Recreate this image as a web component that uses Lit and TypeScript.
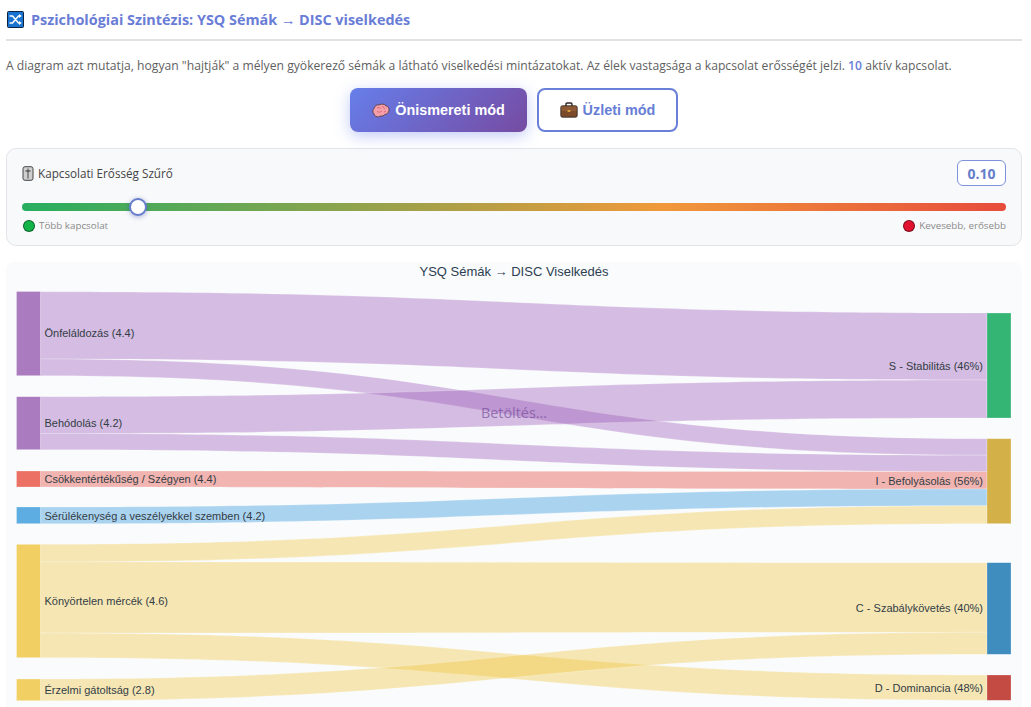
import { LitElement, html, css, svg } from "lit";
import { customElement } from "lit/decorators.js";

type Node = { label: string; y0: number; y1: number; color: string; side: "l" | "r"; ly: number };
type Link = { a0: number; a1: number; b0: number; b1: number; color: string };

const PURPLE = "rgba(155,89,182,0.39)";
const RED = "rgba(231,76,60,0.4)";
const BLUE = "rgba(52,152,219,0.4)";
const YELLOW = "rgba(240,196,60,0.38)";

const NODES: Node[] = [
  { label: "Önfeláldozás (4.4)", y0: 291.5, y1: 375.7, color: "#ab7bc0", side: "l", ly: 333 },
  { label: "Behódolás (4.2)", y0: 396.7, y1: 449.7, color: "#ab7bc0", side: "l", ly: 423 },
  { label: "Csökkentértékűség / Szégyen (4.4)", y0: 471, y1: 487, color: "#ec7063", side: "l", ly: 479 },
  { label: "Sérülékenység a veszélyekkel szemben (4.2)", y0: 507, y1: 523.7, color: "#5dade2", side: "l", ly: 516 },
  { label: "Könyörtelen mércék (4.6)", y0: 544.3, y1: 657.7, color: "#f1cf63", side: "l", ly: 601 },
  { label: "Érzelmi gátoltság (2.8)", y0: 679, y1: 700.7, color: "#f1cf63", side: "l", ly: 690 },
  { label: "S - Stabilitás (46%)", y0: 313, y1: 418, color: "#34b574", side: "r", ly: 365.5 },
  { label: "I - Befolyásolás (56%)", y0: 438.7, y1: 523.7, color: "#d4b048", side: "r", ly: 481 },
  { label: "C - Szabálykövetés (40%)", y0: 562.7, y1: 654.3, color: "#3f8cbf", side: "r", ly: 608 },
  { label: "D - Dominancia (48%)", y0: 675, y1: 700.3, color: "#c44a44", side: "r", ly: 688 },
];

const LINKS: Link[] = [
  { a0: 291.7, a1: 359, b0: 313, b1: 380, color: PURPLE },
  { a0: 359, a1: 375.7, b0: 438.7, b1: 455.2, color: PURPLE },
  { a0: 396.7, a1: 433.5, b0: 380, b1: 418, color: PURPLE },
  { a0: 433.5, a1: 449.7, b0: 455.2, b1: 471.5, color: PURPLE },
  { a0: 471, a1: 487, b0: 471.5, b1: 489, color: RED },
  { a0: 507, a1: 523.7, b0: 489, b1: 505.7, color: BLUE },
  { a0: 544.3, a1: 562, b0: 505.7, b1: 523.7, color: YELLOW },
  { a0: 562, a1: 633, b0: 562.7, b1: 632.3, color: YELLOW },
  { a0: 633, a1: 657.7, b0: 675, b1: 700.3, color: YELLOW },
  { a0: 679, a1: 700.7, b0: 632.3, b1: 654.3, color: YELLOW },
];

const X0 = 10.5, X1 = 34.5, X2 = 981; // chart-local x
const TOP = 262;
const xm = (X1 + X2) / 2;

function linkPath(l: Link): string {
  const t = (v: number) => v - TOP;
  return `M${X1} ${t(l.a0)}C${xm} ${t(l.a0)} ${xm} ${t(l.b0)} ${X2} ${t(l.b0)}L${X2} ${t(l.b1)}C${xm} ${t(l.b1)} ${xm} ${t(l.a1)} ${X1} ${t(l.a1)}Z`;
}

@customElement("app-root")
export class AppRoot extends LitElement {
  static styles = css`
    :host {
      display: block;
      height: 707px;
      overflow: hidden;
      box-sizing: border-box;
      padding: 0 9px 0 6px;
      background: #fff;
      font-family: "Open Sans", "Noto Sans", sans-serif;
      color: #555;
    }
    .head {
      display: flex;
      align-items: center;
      gap: 7px;
      height: 41px;
      padding-left: 1px;
      padding-bottom: 1px;
      box-sizing: border-box;
      border-bottom: 2px solid #e2e2e2;
      font-size: 14.4px;
      font-weight: 700;
      color: #6a7dd6;
    }
    .desc {
      margin: 0;
      padding-top: 16px;
      line-height: 18px;
      font-size: 12.16px;
      color: #5f5f5f;
      white-space: nowrap;
    }
    .desc b { color: #667ed6; font-weight: 600; }
    .modes {
      display: flex;
      justify-content: center;
      gap: 10px;
      margin-top: 13px;
    }
    .btn {
      display: flex;
      align-items: center;
      justify-content: center;
      gap: 5px;
      box-sizing: border-box;
      height: 44px;
      border-radius: 8px;
      font-family: "Liberation Sans", Arial, sans-serif;
      font-size: 14.4px;
      font-weight: 700;
    }
    .btn.on {
      width: 177px;
      color: #fff;
      background: linear-gradient(135deg, #667eea, #764ba2);
      box-shadow: 0 4px 15px rgba(102, 126, 234, 0.4);
    }
    .btn.off {
      width: 141px;
      color: #667ed6;
      background: #fff;
      border: 2px solid #6a7fd8;
    }
    .panel {
      box-sizing: border-box;
      height: 98px;
      margin-top: 16px;
      padding: 11px 15px 0;
      background: #f8f9fb;
      border: 1px solid #e2e4e8;
      border-radius: 10px;
    }
    .row {
      display: flex;
      justify-content: space-between;
      align-items: center;
    }
    .ftitle {
      display: flex;
      align-items: center;
      gap: 4px;
      font-size: 11.7px;
      font-weight: 500;
      color: #444;
    }
    .val {
      box-sizing: border-box;
      width: 49px;
      height: 26px;
      display: flex;
      align-items: center;
      justify-content: center;
      font-size: 14px;
      font-weight: 700;
      color: #667ecb;
      background: #fff;
      border: 1px solid #7f93dc;
      border-radius: 6px;
    }
    .track {
      position: relative;
      height: 8px;
      margin-top: 17px;
      border-radius: 4px;
      background: linear-gradient(90deg, #27ae60 0%, #f0993a 65%, #e74c3c 100%);
    }
    .thumb {
      position: absolute;
      left: 107px;
      top: -5px;
      width: 18px;
      height: 18px;
      box-sizing: border-box;
      border-radius: 50%;
      background: #fff;
      border: 2px solid #667ecb;
      box-shadow: 0 1px 5px rgba(60, 80, 170, 0.45);
    }
    .ends {
      display: flex;
      justify-content: space-between;
      margin-top: 8px;
      font-size: 9.8px;
      line-height: 13px;
      color: #8a8a8a;
    }
    .end { display: flex; align-items: center; gap: 4px; }
    .dot {
      width: 12px;
      height: 12px;
      margin-left: 1px;
      border-radius: 50%;
      border: 1px solid rgba(0, 0, 0, 0.45);
      box-sizing: border-box;
    }
    .dot.g { background: #12b347; }
    .dot.r { background: #e0122f; }
    .chart {
      position: relative;
      height: 460px;
      margin-top: 16px;
      background: #f9fbfd;
      border-radius: 8px 8px 0 0;
    }
    .chart svg { display: block; }
    .ctitle {
      font-family: "Liberation Sans", Arial, sans-serif;
      font-size: 13px;
      fill: #2c3e50;
    }
    .lbl {
      font-family: "Liberation Sans", Arial, sans-serif;
      font-size: 11px;
      fill: #333d45;
    }
    .loading {
      position: absolute;
      left: 0;
      right: 0;
      top: 141px;
      text-align: center;
      font-size: 14.4px;
      color: rgba(110, 70, 150, 0.65);
    }
  `;

  private shuffle() {
    return html`<svg width="17" height="17" viewBox="0 0 17 17">
      <rect x=".5" y=".5" width="16" height="16" rx="1" fill="#1a73d0" stroke="#0e2340"/>
      <path d="M2.500 5h3l6 7H13M2.500 12h3l6-7H13" fill="none" stroke="#fff" stroke-width="1.500"/>
      <path d="M12 3l2.800 2L12 7zM12 10l2.800 2-2.800 2z" fill="#fff"/>
    </svg>`;
  }

  private brain() {
    return html`<svg width="18" height="15" viewBox="0 0 18 15">
      <path d="M2 11C.4 9.500.5 6.600 2 5.400 2.600 2.800 5 1.400 7.400 1.800 9.400.6 12.600 1 14 2.800c2.200.6 3.400 2.600 3 4.600-.2 2.400-2 4-4.200 4-1 1.400-2.800 2-4.600 1.600-.8.8-2.200 1.200-3.200.6-1-.2-2.600-.6-3-2.600z" fill="#f4a0ab" stroke="#5a3a44" stroke-width=".9"/>
      <path d="M5 5c1.500-1 3-.5 3.500.8M10 3.600c1.400.2 2.500 1.200 2.600 2.500M5 8.600c1.500.8 3.500.6 4.800-.4M12 9c.8-.1 1.500-.5 2-1.200" fill="none" stroke="#d9606f" stroke-width=".9"/>
    </svg>`;
  }

  private case() {
    return html`<svg width="18" height="16" viewBox="0 0 18 16">
      <path d="M6 4V2.200C6 1.500 6.500 1 7.200 1h3.600c.7 0 1.200.5 1.200 1.200V4" fill="none" stroke="#2c2320" stroke-width="1.400"/>
      <rect x=".8" y="3.800" width="16.400" height="11.400" rx="1.600" fill="#7a4a2a" stroke="#2c2320" stroke-width=".8"/>
      <rect x="1.500" y="4.500" width="15" height="4.600" rx="1" fill="#8d5a35"/>
      <rect x="7.600" y="8.200" width="2.800" height="1.600" fill="#f0b040"/>
    </svg>`;
  }

  private slider() {
    return html`<svg width="12" height="15" viewBox="0 0 12 15">
      <rect x="1" y=".7" width="10" height="13.600" rx="2" fill="#cfcfcf" stroke="#444" stroke-width="1"/>
      <path d="M6 2.500v10" stroke="#444" stroke-width="1"/>
      <path d="M3.500 5h5" stroke="#444" stroke-width="1.200"/>
    </svg>`;
  }

  render() {
    return html`
      <div class="head">${this.shuffle()}<span>Pszichológiai Szintézis: YSQ Sémák → DISC viselkedés</span></div>
      <p class="desc">A diagram azt mutatja, hogyan "hajtják" a mélyen gyökerező sémák a látható viselkedési mintázatokat. Az élek vastagsága a kapcsolat erősségét jelzi. <b>10</b> aktív kapcsolat.</p>
      <div class="modes">
        <div class="btn on">${this.brain()}<span>Önismereti mód</span></div>
        <div class="btn off">${this.case()}<span>Üzleti mód</span></div>
      </div>
      <div class="panel">
        <div class="row">
          <div class="ftitle">${this.slider()}<span>Kapcsolati Erősség Szűrő</span></div>
          <div class="val">0.10</div>
        </div>
        <div class="track"><div class="thumb"></div></div>
        <div class="ends">
          <div class="end"><span class="dot g"></span><span>Több kapcsolat</span></div>
          <div class="end"><span class="dot r"></span><span>Kevesebb, erősebb</span></div>
        </div>
      </div>
      <div class="chart">
        <svg width="1016" height="460" viewBox="0 0 1016 460">
          <text class="ctitle" x="508" y="14" text-anchor="middle">YSQ Sémák → DISC Viselkedés</text>
          ${LINKS.map((l) => svg`<path d=${linkPath(l)} fill=${l.color} stroke="rgba(255,255,255,.45)" stroke-width=".5"/>`)}
          ${NODES.map((n) => {
            const x = n.side === "l" ? X0 : X2;
            return svg`<rect x=${x} y=${n.y0 - TOP} width="24" height=${n.y1 - n.y0} fill=${n.color} stroke="rgba(255,255,255,.5)" stroke-width=".5"/>`;
          })}
          ${NODES.map((n) =>
            svg`<text class="lbl" x=${n.side === "l" ? X1 + 4 : X2 - 4} y=${n.ly - TOP + 4} text-anchor=${n.side === "l" ? "start" : "end"}>${n.label}</text>`
          )}
        </svg>
        <div class="loading">Betöltés...</div>
      </div>
    `;
  }
}
